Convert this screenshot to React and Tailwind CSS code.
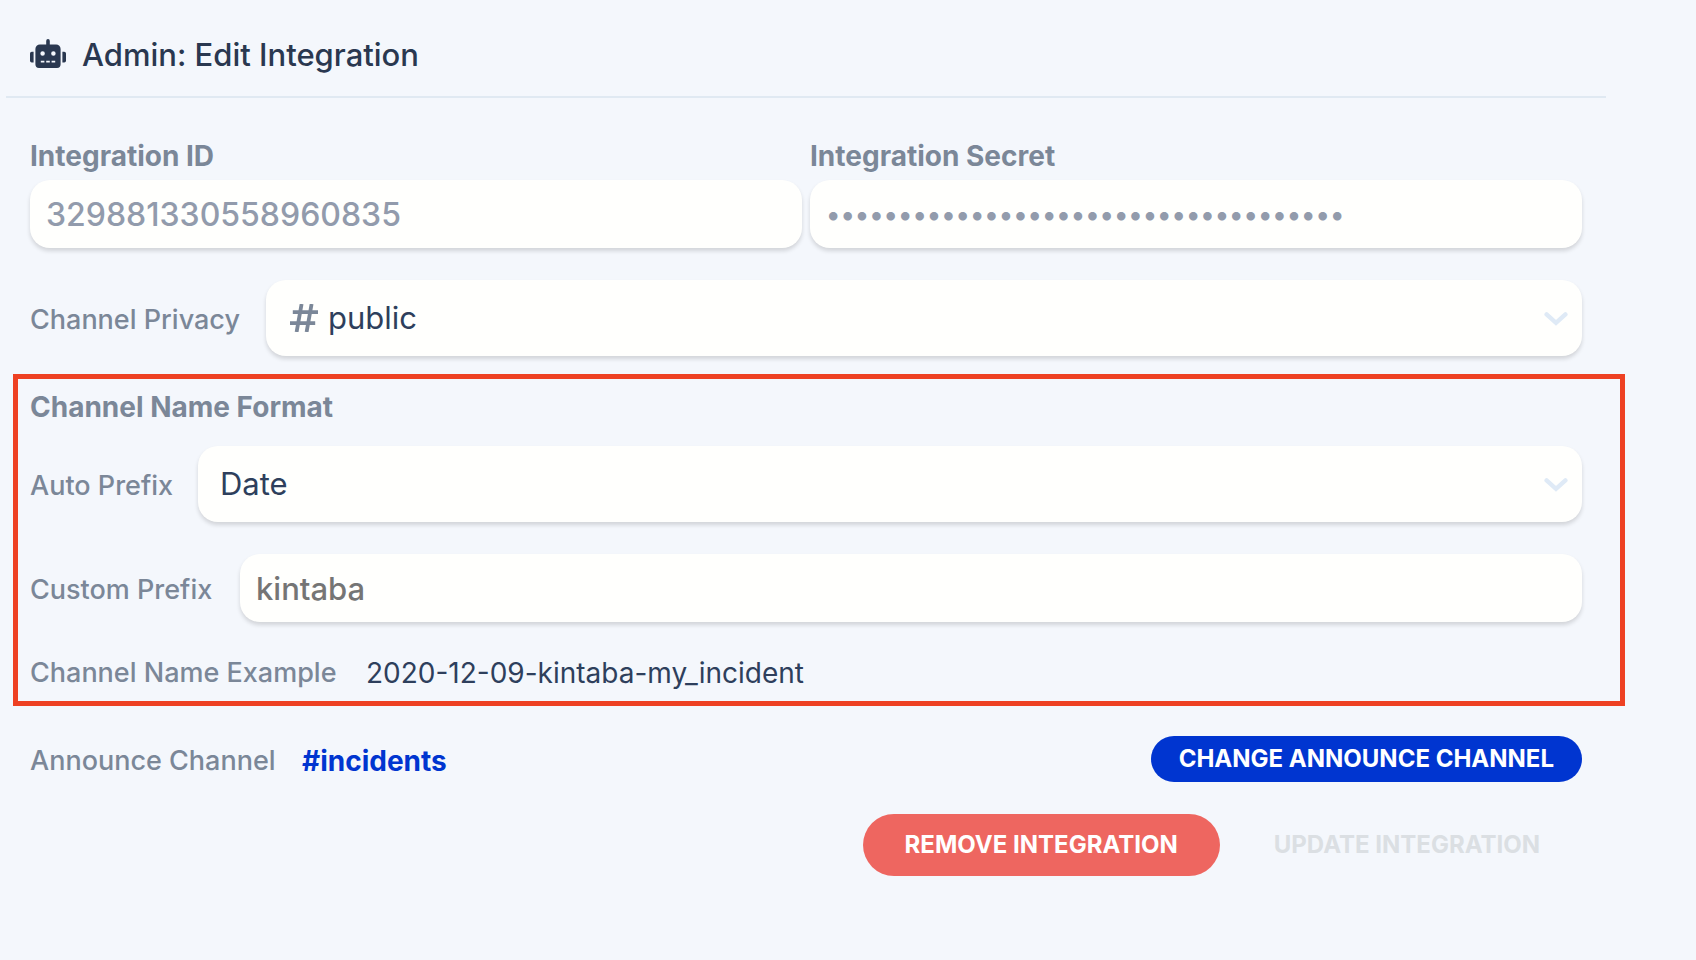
import React from "react";
import { FaRobot } from "react-icons/fa";

const field =
  "block w-full min-w-0 rounded-[20px] border-0 bg-[#fffffd] outline-none shadow-[0_3px_4px_rgba(0,0,0,0.14)]";
const heading = "block text-[28px] leading-8 font-bold text-[#7b8798]";
const label =
  "shrink-0 pt-1 text-[27px] leading-8 font-medium whitespace-nowrap text-[#7b8798]";

function Chevron() {
  return (
    <svg
      aria-hidden="true"
      viewBox="0 0 24 14"
      className="pointer-events-none absolute top-8 right-[14px] h-[14px] w-6"
      fill="none"
      stroke="#dfeaf6"
      strokeWidth="4.4"
      strokeLinecap="round"
    >
      <path d="M2.6 2.4 L12 10.8 L21.4 2.4" />
    </svg>
  );
}

function Hash() {
  return (
    <svg
      aria-hidden="true"
      viewBox="0 0 28 28"
      className="pointer-events-none absolute top-6 left-6 size-7"
      fill="none"
      stroke="#7b8798"
      strokeWidth="3.8"
    >
      <path d="M11.6 0 L6.6 28 M21.6 0 L16.6 28 M2.8 8.2 H28 M0 19.2 H25.2" />
    </svg>
  );
}

function SelectField({ id, options, icon }) {
  return (
    <div className="relative min-w-0 flex-1">
      {icon}
      <select
        id={id}
        className={`${field} h-[76px] appearance-none pr-12 text-[31px] text-[#2e3f5c] ${icon ? "pl-[62px]" : "pl-[22px]"}`}
      >
        {options.map((option) => (
          <option key={option}>{option}</option>
        ))}
      </select>
      <Chevron />
    </div>
  );
}

export default function App() {
  return (
    <div className="min-h-screen bg-[#f4f7fc] pr-[90px] pl-1.5 font-['Inter','Liberation_Sans',sans-serif]">
      <header className="flex items-center gap-4 border-b-2 border-[#e0e9f2] px-6 pt-[31px] pb-[21px]">
        <FaRobot aria-hidden="true" className="h-[29px] w-9 text-[#2a3850]" />
        <h1 className="pt-1 text-[31px] leading-10 font-medium text-[#2a3850]">
          Admin: Edit Integration
        </h1>
      </header>

      <form className="px-6 pt-[42px] pb-10" onSubmit={(e) => e.preventDefault()}>
        <div className="grid grid-cols-2 gap-2">
          <div>
            <label htmlFor="integration-id" className={heading}>
              Integration ID
            </label>
            <input
              id="integration-id"
              type="text"
              readOnly
              defaultValue="329881330558960835"
              className={`${field} mt-2 h-[68px] px-4 text-[32px] font-medium text-[#929bac]`}
            />
          </div>
          <div>
            <label htmlFor="integration-secret" className={heading}>
              Integration Secret
            </label>
            <input
              id="integration-secret"
              type="password"
              readOnly
              defaultValue="000000000000000000000000000000000000"
              className={`${field} mt-2 h-[68px] px-4 text-[27px] font-medium text-[#929bac]`}
            />
          </div>
        </div>

        <div className="mt-8 flex items-center gap-6">
          <label htmlFor="privacy" className={`${label} w-[212px]`}>
            Channel Privacy
          </label>
          <SelectField id="privacy" options={["public", "private"]} icon={<Hash />} />
        </div>

        <section className="mt-[18px] -mr-[43px] -ml-[17px] border-[5px] border-[#ee4123] pt-3 pr-[38px] pb-3 pl-3">
          <h2 className={heading}>Channel Name Format</h2>
          <div className="mt-[23px] flex items-center gap-6">
            <label htmlFor="auto-prefix" className={`${label} w-36`}>
              Auto Prefix
            </label>
            <SelectField id="auto-prefix" options={["Date", "None"]} />
          </div>
          <div className="mt-8 flex items-center gap-6">
            <label htmlFor="custom-prefix" className={`${label} w-[186px]`}>
              Custom Prefix
            </label>
            <input
              id="custom-prefix"
              type="text"
              placeholder="kintaba"
              className={`${field} h-[68px] px-4 text-[31px] font-medium text-[#2e3f5c] placeholder:text-[#757575]`}
            />
          </div>
          <div className="mt-[31px] flex items-center gap-6">
            <span className={`${label} w-[312px]`}>Channel Name Example</span>
            <span className="pt-1 text-[28px] leading-8 text-[#2e3f5c]">
              2020-12-09-kintaba-my_incident
            </span>
          </div>
        </section>

        <div className="mt-[30px] flex items-center gap-6">
          <span className={`${label} w-[248px]`}>Announce Channel</span>
          <a href="#incidents" className="pt-1 text-[28px] leading-8 font-bold text-[#0035d0]">
            #incidents
          </a>
          <button
            type="button"
            className="ml-auto h-[46px] rounded-full bg-[#0035d0] px-7 text-[24px] font-bold whitespace-nowrap text-white uppercase"
          >
            Change Announce Channel
          </button>
        </div>

        <div className="mt-8 flex justify-end gap-3">
          <button
            type="button"
            className="h-[62px] rounded-full bg-[#ee6660] px-[42px] text-[24px] font-bold whitespace-nowrap text-white uppercase"
          >
            Remove Integration
          </button>
          <button
            type="submit"
            disabled
            className="h-[62px] rounded-full px-[42px] text-[24px] font-bold whitespace-nowrap text-[#dbdfe3] uppercase"
          >
            Update Integration
          </button>
        </div>
      </form>
    </div>
  );
}
